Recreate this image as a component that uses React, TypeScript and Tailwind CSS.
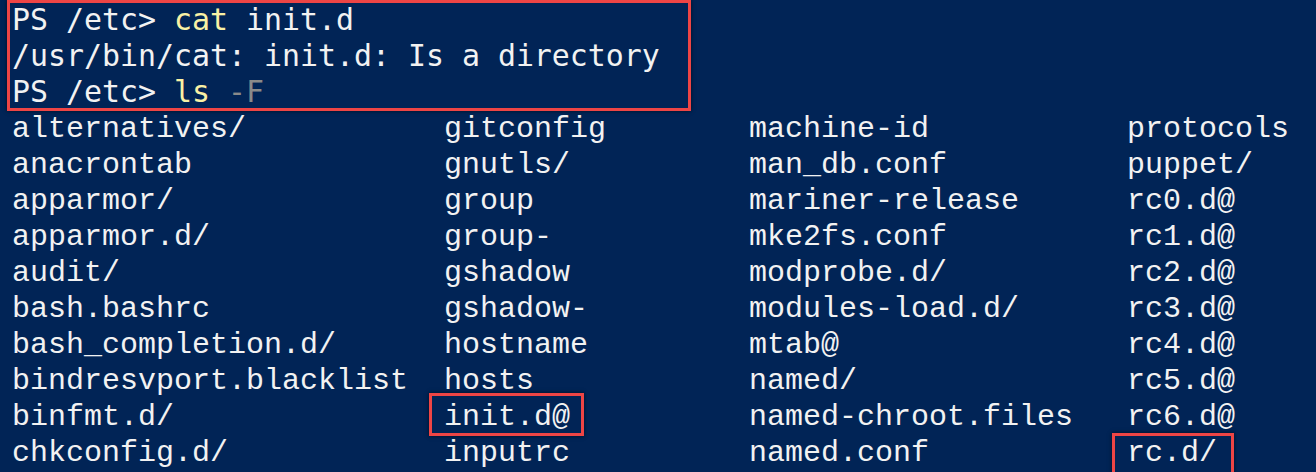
import React from "react";

const rows: string[][] = [
  ["alternatives/", "gitconfig", "machine-id", "protocols"],
  ["anacrontab", "gnutls/", "man_db.conf", "puppet/"],
  ["apparmor/", "group", "mariner-release", "rc0.d@"],
  ["apparmor.d/", "group-", "mke2fs.conf", "rc1.d@"],
  ["audit/", "gshadow", "modprobe.d/", "rc2.d@"],
  ["bash.bashrc", "gshadow-", "modules-load.d/", "rc3.d@"],
  ["bash_completion.d/", "hostname", "mtab@", "rc4.d@"],
  ["bindresvport.blacklist", "hosts", "named/", "rc5.d@"],
  ["binfmt.d/", "init.d@", "named-chroot.files", "rc6.d@"],
  ["chkconfig.d/", "inputrc", "named.conf", "rc.d/"],
];

export default function App() {
  return (
    <div className="relative w-[1316px] h-[472px] overflow-hidden bg-[#012456] text-[#f2f2f2]">
      <div className="pl-[12px] pt-[2px]">
        <div className="font-['DejaVu_Sans_Mono',monospace] text-[29.9px] leading-[36px] whitespace-pre">
          <div className="h-[36px]">
            PS /etc&gt; <span className="text-[#f9f1a5]">cat</span> init.d
          </div>
          <div className="h-[36px]">/usr/bin/cat: init.d: Is a directory</div>
          <div className="h-[36px]">
            PS /etc&gt; <span className="text-[#f9f1a5]">ls</span>{" "}
            <span className="text-[#8a8a8a]">-F</span>
          </div>
        </div>
        <div className="pt-[1px] font-['Liberation_Mono',monospace] text-[30px] leading-[36px] whitespace-pre">
          {rows.map((r, i) => (
            <div key={i} className="grid grid-cols-[432px_305px_378px_1fr] h-[36px]">
              {r.map((c, j) => (
                <span key={j}>{c}</span>
              ))}
            </div>
          ))}
        </div>
      </div>
      <div className="absolute left-[7px] top-0 w-[684px] h-[111px] border-[3px] border-[#ee4545] shadow-[0_0_4px_rgba(0,0,0,0.6)]" />
      <div className="absolute left-[429px] top-[393px] w-[155px] h-[43px] border-[3px] border-[#ee4545] shadow-[0_0_4px_rgba(0,0,0,0.6)]" />
      <div className="absolute left-[1112px] top-[433px] w-[122px] h-[50px] border-[3px] border-[#ee4545] shadow-[0_0_4px_rgba(0,0,0,0.6)]" />
    </div>
  );
}
